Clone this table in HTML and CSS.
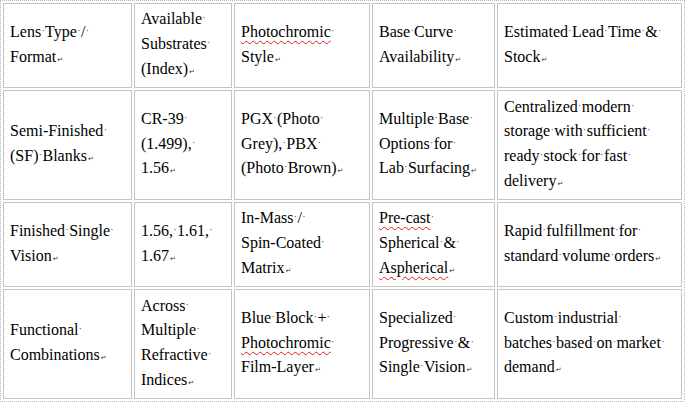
FILE: index.html
```html
<!DOCTYPE html>
<html>
<head>
<meta charset="utf-8">
<link rel="stylesheet" href="styles.css">
</head>
<body>
<table class="grid">
<colgroup>
<col class="c1"><col class="c2"><col class="c3"><col class="c4"><col class="c5">
</colgroup>
<tr class="r1">
<td>Lens<span class="d">·</span>Type<span class="d">·</span>/<span class="d">·</span><br>Format<span class="p">↵</span></td>
<td>Available<span class="d">·</span><br>Substrates<span class="d">·</span><br>(Index)<span class="p">↵</span></td>
<td><span class="sp">Photochromic</span><span class="d">·</span><br>Style<span class="p">↵</span></td>
<td>Base<span class="d">·</span>Curve<span class="d">·</span><br>Availability<span class="p">↵</span></td>
<td>Estimated<span class="d">·</span>Lead<span class="d">·</span>Time<span class="d">·</span>&amp;<span class="d">·</span><br>Stock<span class="p">↵</span></td>
</tr>
<tr class="r2">
<td>Semi-Finished<span class="d">·</span><br>(SF)<span class="d">·</span>Blanks<span class="p">↵</span></td>
<td>CR-39<span class="d">·</span><br>(1.499),<span class="d">·</span><br>1.56<span class="p">↵</span></td>
<td>PGX<span class="d">·</span>(Photo<span class="d">·</span><br>Grey),<span class="d">·</span>PBX<span class="d">·</span><br>(Photo<span class="d">·</span>Brown)<span class="p">↵</span></td>
<td>Multiple<span class="d">·</span>Base<span class="d">·</span><br>Options<span class="d">·</span>for<span class="d">·</span><br>Lab<span class="d">·</span>Surfacing<span class="p">↵</span></td>
<td>Centralized<span class="d">·</span>modern<span class="d">·</span><br>storage<span class="d">·</span>with<span class="d">·</span>sufficient<span class="d">·</span><br>ready<span class="d">·</span>stock<span class="d">·</span>for<span class="d">·</span>fast<span class="d">·</span><br>delivery<span class="p">↵</span></td>
</tr>
<tr class="r3">
<td>Finished<span class="d">·</span>Single<span class="d">·</span><br>Vision<span class="p">↵</span></td>
<td>1.56,<span class="d">·</span>1.61,<span class="d">·</span><br>1.67<span class="p">↵</span></td>
<td>In-Mass<span class="d">·</span>/<span class="d">·</span><br>Spin-Coated<span class="d">·</span><br>Matrix<span class="p">↵</span></td>
<td><span class="sp">Pre-cast</span><span class="d">·</span><br>Spherical<span class="d">·</span>&amp;<span class="d">·</span><br><span class="sp">Aspherical</span><span class="p">↵</span></td>
<td>Rapid<span class="d">·</span>fulfillment<span class="d">·</span>for<span class="d">·</span><br>standard<span class="d">·</span>volume<span class="d">·</span>orders<span class="p">↵</span></td>
</tr>
<tr class="r4">
<td>Functional<span class="d">·</span><br>Combinations<span class="p">↵</span></td>
<td>Across<span class="d">·</span><br>Multiple<span class="d">·</span><br>Refractive<span class="d">·</span><br>Indices<span class="p">↵</span></td>
<td>Blue<span class="d">·</span>Block<span class="d">·</span>+<span class="d">·</span><br><span class="sp">Photochromic</span><span class="d">·</span><br>Film-Layer<span class="p">↵</span></td>
<td>Specialized<span class="d">·</span><br>Progressive<span class="d">·</span>&amp;<span class="d">·</span><br>Single<span class="d">·</span>Vision<span class="p">↵</span></td>
<td>Custom<span class="d">·</span>industrial<span class="d">·</span><br>batches<span class="d">·</span>based<span class="d">·</span>on<span class="d">·</span>market<span class="d">·</span><br>demand<span class="p">↵</span></td>
</tr>
</table>
</body>
</html>
```
FILE: styles.css
```css
html, body {
  margin: 0;
  padding: 0;
  background: #ffffff;
}

.grid {
  table-layout: fixed;
  width: 685px;
  border-collapse: separate;
  border-spacing: 2px;
  border: 1px dotted #b8b8b8;
  font-family: "Liberation Serif", "Times New Roman", serif;
  font-size: 16px;
  line-height: 24.7px;
  color: #000000;
}

.c1 { width: 129px; }
.c2 { width: 98px; }
.c3 { width: 136px; }
.c4 { width: 123px; }
.c5 { width: 185px; }

.grid td {
  border: 1px solid #c4c4c4;
  padding: 1px 4px 0 6px;
  vertical-align: middle;
  white-space: nowrap;
  overflow: hidden;
}

.r1, .r3 { height: 85px; }
.r2, .r4 { height: 110px; }

.d {
  display: inline-block;
  width: 4px;
  font-size: 10px;
  line-height: 1;
  text-align: center;
  vertical-align: 3px;
  color: #444444;
}

.p {
  font-family: "DejaVu Sans", sans-serif;
  font-size: 7px;
  color: #333333;
  margin-left: 1px;
}

.sp {
  text-decoration: underline wavy #e02020;
  text-decoration-thickness: 1px;
  text-underline-offset: 3px;
}
```
